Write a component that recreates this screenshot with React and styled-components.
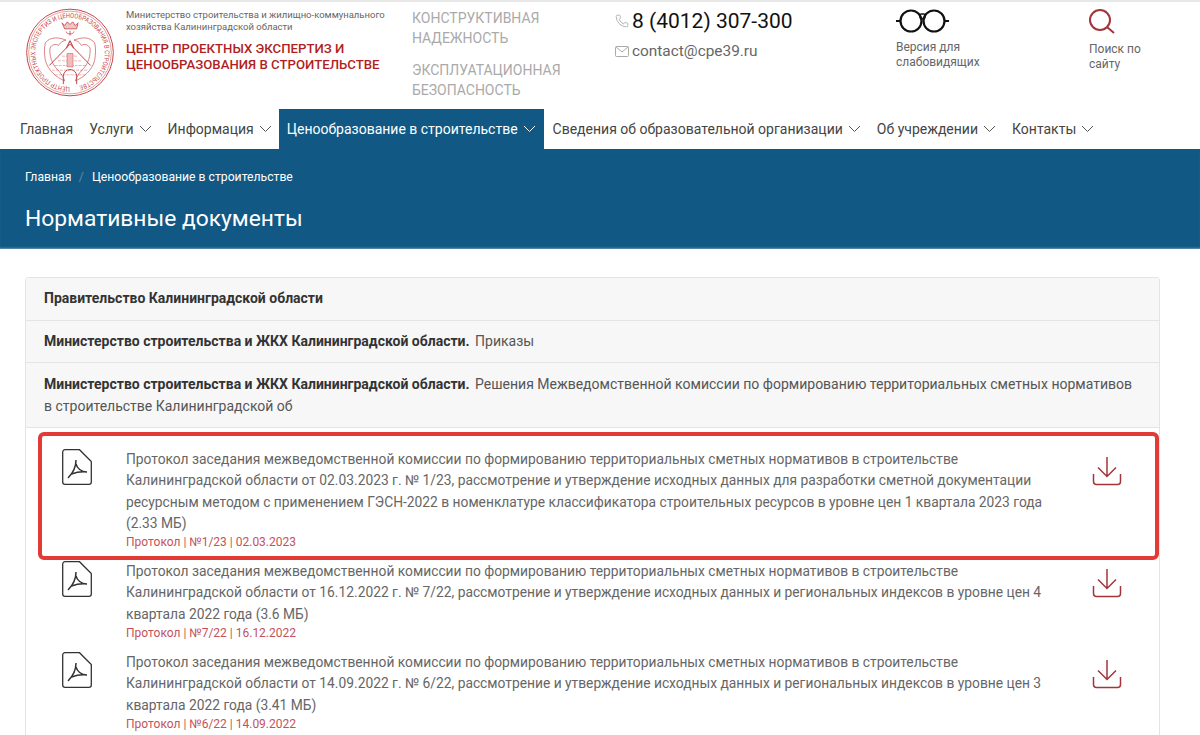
import React from 'react'
import styled, {createGlobalStyle} from 'styled-components'
import {Phone as PhoneGlyph} from 'lucide-react'

const NAV = [
    {label: 'Главная', arrow: false},
    {label: 'Услуги', arrow: true},
    {label: 'Информация', arrow: true},
    {label: 'Ценообразование в строительстве', arrow: true, active: true},
    {label: 'Сведения об образовательной организации', arrow: true},
    {label: 'Об учреждении', arrow: true},
    {label: 'Контакты', arrow: true},
]

const DOCS = [
    {
        text: 'Протокол заседания межведомственной комиссии по формированию территориальных сметных нормативов в строительстве Калининградской области от 02.03.2023 г. № 1/23, рассмотрение и утверждение исходных данных для разработки сметной документации ресурсным методом с применением ГЭСН-2022 в номенклатуре классификатора строительных ресурсов в уровне цен 1 квартала 2023 года (2.33 МБ)',
        meta: 'Протокол | №1/23 | 02.03.2023',
        highlighted: true,
    },
    {
        text: 'Протокол заседания межведомственной комиссии по формированию территориальных сметных нормативов в строительстве Калининградской области от 16.12.2022 г. № 7/22, рассмотрение и утверждение исходных данных и региональных индексов в уровне цен 4 квартала 2022 года (3.6 МБ)',
        meta: 'Протокол | №7/22 | 16.12.2022',
    },
    {
        text: 'Протокол заседания межведомственной комиссии по формированию территориальных сметных нормативов в строительстве Калининградской области от 14.09.2022 г. № 6/22, рассмотрение и утверждение исходных данных и региональных индексов в уровне цен 3 квартала 2022 года (3.41 МБ)',
        meta: 'Протокол | №6/22 | 14.09.2022',
    },
]

const Chevron = ({color}) => (
    <svg width="13" height="8" viewBox="0 0 13 8" fill="none" stroke={color} strokeWidth="1">
        <path d="M1 1l5.5 5.5L12 1" />
    </svg>
)

const Seal = () => (
    <svg width="88" height="89" viewBox="18 15 264 264" fill="none" stroke="#c9474a">
        <defs>
            <path id="sealArc" d="M150 251A104 104 0 1 1 150 43A104 104 0 1 1 150 251" />
        </defs>
        <circle cx="150" cy="147" r="130" strokeWidth="3" />
        <circle cx="150" cy="147" r="124" strokeWidth="1.500" />
        <text fontFamily="Roboto, sans-serif" fontSize="20" fill="#c9474a" stroke="none" textLength="625" lengthAdjust="spacingAndGlyphs">
            <textPath href="#sealArc">ЦЕНТР ПРОЕКТНЫХ ЭКСПЕРТИЗ И ЦЕНООБРАЗОВАНИЯ В СТРОИТЕЛЬСТВЕ</textPath>
        </text>
        <path d="M126 58l8 8 8-11 8 8 8-8 8 11 8-8-4 18h-36z" strokeWidth="2.500" fill="#f1c4c4" />
        <path d="M138 84c3 10 21 10 24 0M150 82v14" strokeWidth="2.500" />
        <path d="M76 118c14-18 38-18 62-8-14 3-18 9-22 16-8-6-22-3-26 8-2 22 4 46 24 66 8 8 16 20 20 32-24-10-50-30-58-62-3-18-4-36 0-52z" strokeWidth="2" />
        <path d="M224 118c-14-18-38-18-62-8 14 3 18 9 22 16 8-6 22-3 26 8 2 22-4 46-24 66-8 8-16 20-20 32 24-10 50-30 58-62 3-18 4-36 0-52z" strokeWidth="2" />
        <path d="M88 186l62-64 62 64" strokeWidth="3" />
        <path d="M150 112l-11 22M150 112l11 22" strokeWidth="3.500" />
        <path d="M104 186h92M114 172h72M126 158h48M96 200h108M104 214h92" strokeWidth="1.200" strokeDasharray="9 3" />
        <path d="M130 242v-24a20 20 0 0 1 40 0v24" strokeWidth="3" />
        <path d="M141 150h18v40h-18z" strokeWidth="1.500" fill="#f0bcbc" />
    </svg>
)

const Glasses = () => (
    <svg width="53" height="24" viewBox="0 0 53 24" fill="none" stroke="#111" strokeWidth="2.200">
        <circle cx="15" cy="12" r="10.500" />
        <circle cx="38" cy="12" r="10.500" />
        <path d="M0 12h4M49 12h4" />
        <rect x="23.800" y="5" width="5.400" height="4.500" rx="1.500" strokeWidth="1.300" />
    </svg>
)

const SearchIcon = () => (
    <svg width="26" height="25" viewBox="0 0 26 25" fill="none" stroke="#a4343a" strokeWidth="2">
        <circle cx="11" cy="11" r="10" />
        <path d="M18 18l7 6" />
    </svg>
)

const MailIcon = () => (
    <svg width="14" height="11" viewBox="0 0 14 11" fill="none" stroke="#aaa">
        <rect x="0.500" y="0.500" width="13" height="10" rx="1" />
        <path d="M1 1l6 5 6-5" />
    </svg>
)

const PdfIcon = () => (
    <svg width="30" height="36" viewBox="0 0 30 36" fill="none" stroke="#333" strokeWidth="1.300">
        <path d="M3 .7h14.500L29.300 12.500V33a2.300 2.300 0 0 1-2.300 2.300H3A2.300 2.300 0 0 1 .7 33V3A2.300 2.300 0 0 1 3 .7z" />
        <path d="M14 11c0 6-3 13-8 18M14 15c1 4 5 8 11 8M9.500 25c4-1.500 9.500-2.500 15.500-2" strokeWidth="1.500" />
    </svg>
)

const DownloadIcon = () => (
    <svg width="30" height="30" viewBox="0 0 30 30" fill="none" stroke="#a4343a" strokeWidth="1.500">
        <path d="M15 1v19M6 11.500l9 9 9-9" />
        <path d="M1.500 18v7.500a3 3 0 0 0 3 3h21a3 3 0 0 0 3-3V18" />
    </svg>
)

const App = () => (
    <Page>
        <GlobalStyle />
        <Header>
            <LogoBox><Seal /></LogoBox>
            <Org>
                <Ministry>Министерство строительства и жилищно-коммунального хозяйства Калининградской области</Ministry>
                <OrgName>ЦЕНТР ПРОЕКТНЫХ ЭКСПЕРТИЗ И ЦЕНООБРАЗОВАНИЯ В СТРОИТЕЛЬСТВЕ</OrgName>
            </Org>
            <Slogans>
                <Slogan>КОНСТРУКТИВНАЯ НАДЕЖНОСТЬ</Slogan>
                <Slogan>ЭКСПЛУАТАЦИОННАЯ БЕЗОПАСНОСТЬ</Slogan>
            </Slogans>
            <Contacts>
                <Phone><PhoneGlyph size={14} color="#aaa" strokeWidth={1.5} />8 (4012) 307-300</Phone>
                <Mail><MailIcon />contact@cpe39.ru</Mail>
            </Contacts>
            <Tool $width="193px">
                <Glasses />
                <ToolLabel $top="7px" $width="90px">Версия для слабовидящих</ToolLabel>
            </Tool>
            <Tool $width="80px">
                <SearchIcon />
                <ToolLabel $top="8px" $width="62px">Поиск по сайту</ToolLabel>
            </Tool>
        </Header>
        <Nav>
            {NAV.map((item) => (
                <NavItem key={item.label} $active={item.active}>
                    {item.label}
                    {item.arrow && <Chevron color={item.active ? '#fff' : '#555'} />}
                </NavItem>
            ))}
        </Nav>
        <Banner>
            <Crumbs>
                <span>Главная</span>
                <CrumbSep>/</CrumbSep>
                <span>Ценообразование в строительстве</span>
            </Crumbs>
            <Title>Нормативные документы</Title>
        </Banner>
        <Content>
            <Panel>
                <PanelRow><b>Правительство Калининградской области</b></PanelRow>
                <PanelRow><b>Министерство строительства и ЖКХ Калининградской области.</b> Приказы</PanelRow>
                <PanelRow $top="11px">
                    <b>Министерство строительства и ЖКХ Калининградской области.</b> Решения Межведомственной комиссии по формированию территориальных сметных нормативов в строительстве Калининградской об
                </PanelRow>
                <DocList>
                    {DOCS.map((doc) => (
                        <DocRow key={doc.meta}>
                            {doc.highlighted && <Highlight />}
                            <PdfCell><PdfIcon /></PdfCell>
                            <DocBody>
                                <DocText>{doc.text}</DocText>
                                <DocMeta>{doc.meta}</DocMeta>
                            </DocBody>
                            <DownloadCell><DownloadIcon /></DownloadCell>
                        </DocRow>
                    ))}
                </DocList>
            </Panel>
        </Content>
    </Page>
)

export default App

const GlobalStyle = createGlobalStyle`
    html, body {
        margin: 0;
        padding: 0;
        background: #fff;
        height: 735px;
        overflow: hidden;
    }
    * {
        box-sizing: border-box;
    }
`
const Page = styled.div`
    width: 1200px;
    height: 735px;
    overflow: hidden;
    font-family: Roboto, sans-serif;
    color: #555;
`
const Header = styled.header`
    display: flex;
    height: 109px;
    padding-left: 26px;
    border-top: 2px solid #e8e8e8;
`
const LogoBox = styled.div`
    width: 100px;
    padding-top: 6px;
`
const Org = styled.div`
    width: 286px;
    padding-top: 7px;
`
const Ministry = styled.div`
    font-size: 9.500px;
    line-height: 11.500px;
    color: #666;
`
const OrgName = styled.div`
    width: 262px;
    margin-top: 9px;
    font-size: 13.200px;
    font-weight: 500;
    line-height: 16px;
    color: #b01f24;
`
const Slogans = styled.div`
    width: 203px;
    padding-top: 6px;
    display: flex;
    flex-direction: column;
    gap: 12px;
`
const Slogan = styled.div`
    width: 160px;
    font-size: 14px;
    line-height: 20px;
    color: #aaa;
`
const Contacts = styled.div`
    width: 281px;
    padding-top: 5px;
`
const Phone = styled.div`
    display: flex;
    align-items: center;
    gap: 3px;
    font-size: 21px;
    line-height: 28px;
    color: #111;
`
const Mail = styled.div`
    display: flex;
    align-items: center;
    gap: 3px;
    margin-top: 6px;
    font-size: 15.400px;
    line-height: 20px;
    color: #666;
`
const Tool = styled.div`
    width: ${(props) => props.$width};
    padding-top: 7px;
    display: flex;
    flex-direction: column;
    align-items: flex-start;
`
const ToolLabel = styled.div`
    width: ${(props) => props.$width};
    margin-top: ${(props) => props.$top};
    font-size: 12px;
    line-height: 15px;
    color: #666;
`
const Nav = styled.nav`
    display: flex;
    height: 40px;
    padding-left: 12px;
`
const NavItem = styled.div`
    display: flex;
    align-items: center;
    gap: 5px;
    padding: 0 8px;
    margin: ${(props) => (props.$active ? '0 1px 0 -1px' : '0')};
    font-size: 14px;
    white-space: nowrap;
    color: ${(props) => (props.$active ? '#fff' : '#444')};
    background: ${(props) => (props.$active ? '#115885' : 'transparent')};
`
const Banner = styled.div`
    height: 100px;
    padding: 20px 25px 0;
    background: #115885;
    box-shadow: inset 0 -2px 2px -1px #6a94b0;
    color: #fff;
`
const Crumbs = styled.div`
    display: flex;
    font-size: 12.200px;
    line-height: 16px;
`
const CrumbSep = styled.span`
    margin: 0 8px 0 7.500px;
    color: #5d8cab;
`
const Title = styled.h1`
    margin: 20px 0 0;
    font-size: 22.800px;
    font-weight: 400;
    line-height: 28px;
`
const Content = styled.main`
    padding: 28px 40px 0 25px;
`
const Panel = styled.section`
    border: 1px solid #e4e4e4;
    border-radius: 3px;
    background: #fff;
`
const PanelRow = styled.div`
    padding: ${(props) => props.$top || '10px'} 18px 10px;
    font-size: 14px;
    line-height: 21.500px;
    color: #555;
    background: #f7f7f7;
    border-bottom: 1px solid #e4e4e4;

    b {
        margin-right: 2px;
        font-weight: 700;
        color: #333;
    }
`
const DocList = styled.div`
    padding-top: 21px;
`
const DocRow = styled.article`
    position: relative;
    display: flex;
    padding-bottom: 11px;
`
const Highlight = styled.div`
    position: absolute;
    left: 12px;
    top: -17px;
    right: 0;
    bottom: 1px;
    border: 4px solid #e23a35;
    border-radius: 6px;
    pointer-events: none;
`
const PdfCell = styled.div`
    width: 100px;
    padding-left: 36px;
`
const DocBody = styled.div`
    width: 934px;
`
const DocText = styled.div`
    font-size: 13.800px;
    line-height: 21.300px;
    color: #666;
`
const DocMeta = styled.div`
    font-size: 12px;
    line-height: 16px;
    color: #c4525a;
`
const DownloadCell = styled.div`
    flex: 1;
    padding-left: 32px;
    padding-top: 7px;
`
